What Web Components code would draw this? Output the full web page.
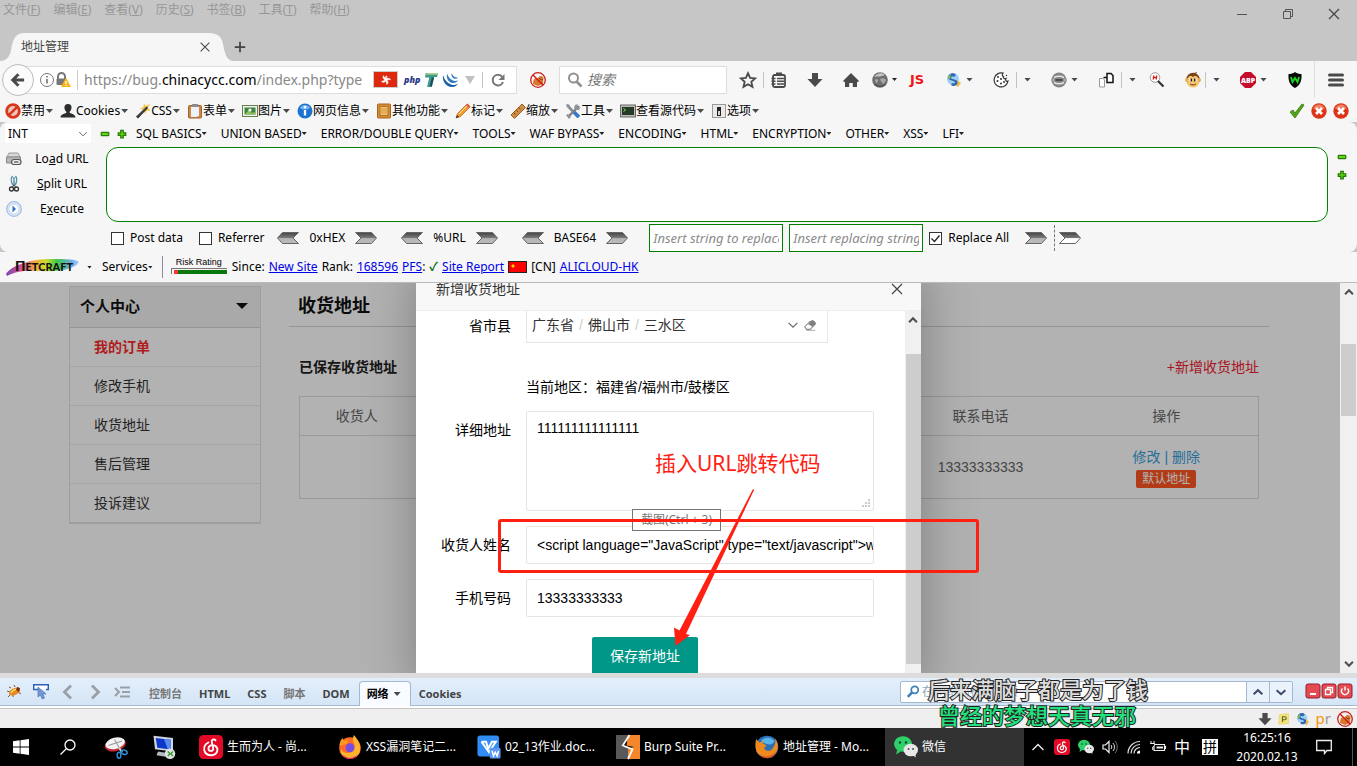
<!DOCTYPE html>
<html lang="zh-CN">
<head>
<meta charset="utf-8">
<title>地址管理</title>
<style>
html,body{margin:0;height:100%}
body{
  --ui:"Noto Sans","Noto Sans CJK SC",sans-serif;
  --web:"Liberation Sans","Noto Sans CJK SC",sans-serif;
  font:12px/16px var(--ui);color:#000;background:#f5f5f5;overflow:hidden}
</style>
</head>
<body>
<app-window></app-window>
<script>
const ICONS={
 min:'<path d="M3 8.500h10" stroke="#555" fill="none"/>',
 restore:'<path d="M3.500 5.500h7v7h-7zM5.500 5.500v-2h7v7h-2" stroke="#555" fill="none"/>',
 close:'<path d="M3 3l10 10M13 3L3 13" stroke="#444" stroke-width="1.200" fill="none"/>',
 plus:'<path d="M8 2v12M2 8h12" stroke="#444" stroke-width="2"/>',
 back:'<path d="M8.500 1.500L2 8l6.500 6.500M3 8h12" stroke="#4a4a4a" stroke-width="3.400" fill="none"/>',
 info:'<circle cx="8" cy="8" r="6.500" fill="none" stroke="#777"/><path d="M8 7v4.500M8 4v1.600" stroke="#666" stroke-width="1.500"/>',
 lock:'<path d="M3 7V4.500a3.500 3.500 0 017 0V7" fill="none" stroke="#777" stroke-width="2"/><rect x="1.500" y="6.500" width="9" height="6.500" rx="1" fill="#777"/><path d="M11 5.500l5 9.500H6z" fill="#fcb316"/><path d="M11 9v3M11 13v1" stroke="#fff" stroke-width="1.300"/>',
 php:'<text x="0" y="11" font-size="9" font-weight="800" font-style="italic" font-family="Open Sans,sans-serif" fill="#2c3a8c">php</text>',
 tt:'<path d="M2 0h14l-1 4.500h-3.500L9 16H3.500L6 5H1.200z" fill="#3c9a8c"/><path d="M3 0h13l-.5 2H2.500z" fill="#a8d08a"/><path d="M9 5L6.500 15H9L11.500 5z" fill="#1f4c5c"/>',
 swirl:'<path d="M1 3c-1 6 3 12 9 12 3 0 5-1.500 6-3.500-2 1.500-4.500 2-7 1C5 11 2.500 8 1 3z" fill="#1b5fa6"/><path d="M5 1.500c-1 5 1.500 9 5.500 9.500 2.500.3 4.500-.8 5.500-2.700-2 1-4 .8-6-.3C7.500 6.500 6 4.500 5 1.500z" fill="#2f7cc4"/><path d="M9.500 1c-.5 3 .8 5.300 3.200 5.700 1.300.2 2.600-.3 3.300-1.300-1.500.3-2.900 0-4-1C10.800 3.400 10 2.400 9.500 1z" fill="#2f7cc4"/>',
 hk:'<path d="M8 8C5 5 7 1 10 2 8 3 10 6 8 8zM8 8c2-4 7-3 7 0-2-2-4 1-7 0zM8 8c4 1 4 6 1 7 1-2-2-4-1-7zM8 8c-1 4-6 5-7 2 2 1 4-3 7-2zM8 8C4 8 2 3 4 1c0 3 4 3 4 7z" fill="#fff" stroke="#fff"/>',
 reload:'<path d="M13 10A5.300 5.300 0 118 2.800c2 0 3.500 1 4.600 2.600" fill="none" stroke="#777" stroke-width="2"/><path d="M14.500 2v6h-6z" fill="#777"/>',
 nofox:'<path d="M3 12c0-5 2-7 5-5.500 1-3 3.500-3 5.500-1L13 12l-5 2z" fill="#d9782c"/><path d="M9 6l2 2 2-1" stroke="#8a4210" fill="none"/><circle cx="8" cy="8" r="7.300" fill="none" stroke="#c82020" stroke-width="1.300"/><path d="M3 3l10 10" stroke="#d01818" stroke-width="1.400"/>',
 search:'<circle cx="6.500" cy="6" r="4.500" fill="none" stroke="#909090" stroke-width="2"/><path d="M9.500 9.500l5 5" stroke="#909090" stroke-width="2.600"/>',
 star:'<path d="M8 1.200l2.100 4.700 5 .5-3.800 3.400 1.200 5L8 12.200l-4.500 2.600 1.200-5L.9 6.400l5-.5z" fill="none" stroke="#4a4a4a" stroke-width="1.800"/>',
 clip:'<path d="M5 .5h6V3H5z" fill="#4a4a4a"/><rect x="2" y="3" width="12" height="12" rx="1.500" fill="none" stroke="#4a4a4a" stroke-width="1.800"/><path d="M.5 6.500h4M.5 9.300h4M.5 12h4M6 6.500h7M6 9.300h7M6 12h7" stroke="#4a4a4a" stroke-width="1.500"/>',
 down:'<path d="M5 1h6v6h4.500L8 15 .5 7H5z" fill="#4a4a4a"/>',
 home:'<path d="M8 1l8 8-1.300 1.200L14 9.500V15H9.800v-4H6.200v4H2V9.500l-.7.700L0 9z" fill="#4a4a4a"/>',
 globe:'<circle cx="8" cy="8" r="7.800" fill="#6f6f6f"/><path d="M2 5c3-4 8-5 11-2-4 2-7 1-11 2z" fill="#c4c4c4"/><path d="M3 8c1-1.500 3-1 3 .5S5 11 4.500 11 3 9 3 8zM8 7c2-1 5-1 6 1-1 3-2 3-3 4-1-2-3-3-3-5z" fill="#a6a6a6"/><path d="M2 12c4 3 8 3 12 0" stroke="#444" fill="none"/>',
 stylish:'<circle cx="7" cy="7" r="6" fill="#9cd0f5"/><path d="M2 5c1-4 6-5 8-2L8 5c-2-1-3 0-3 1 2 2 7 1 7 5-1 3-5 4-7 2l1-2c2 1 3 0 3-1C7 8 2 9 2 5z" fill="#3267b5"/><path d="M11 8l4 3-3 4-2-1c2-1 2-3 1-6z" fill="#f5b83c"/><path d="M1 6l4-4-1 5z" fill="#8cc63f"/>',
 cookie:'<path d="M10 1.200A7 7 0 1015 9c-2 1-3-1-2-2.500-2 .5-3-.5-2.500-2-1.500-.5-1.500-2-.5-3.300z" fill="#fff" stroke="#333" stroke-width="1.200"/><g fill="#333"><circle cx="5" cy="5" r="1"/><circle cx="8" cy="7" r="1"/><circle cx="4.500" cy="9" r="1"/><circle cx="8" cy="11.500" r="1"/><circle cx="11" cy="10" r="1"/><circle cx="13.500" cy="3.500" r=".7"/></g>',
 eye:'<circle cx="8" cy="8" r="7.500" fill="#858585"/><path d="M0 6.500h3.500v3H0zM12.500 6.500H16v3h-3.500z" fill="#a8a8a8"/><path d="M3 5.500c3-1.500 7-1.500 10 0M3 10.500c3 1.500 7 1.500 10 0" stroke="#e4e4e4" stroke-width="1.400" fill="none"/><path d="M4.500 7h7v2h-7z" fill="#4c4c4c"/>',
 proxy:'<path d="M1.500 6.500h3.500l1.500 1.500v7h-5z" fill="#fff" stroke="#999"/><path d="M9 1.500h4l2 2v7H9zM5.500 5.500H9" fill="#fff" stroke="#111" stroke-width="1.500"/>',
 hmag:'<circle cx="6" cy="5.500" r="4.800" fill="#fff" stroke="#999"/><path d="M9 9l5.500 5.500" stroke="#333" stroke-width="2.200"/><path d="M4.800 3.500l-.6 4M7.800 3.500l-.6 4M4.500 5.500h3" stroke="#e01818" stroke-width="1.300"/>',
 monkey:'<circle cx="8" cy="7.500" r="6.800" fill="#7a431d"/><path d="M9 1l3-1-1 2z" fill="#7a431d"/><circle cx="2" cy="8" r="2" fill="#e7a850"/><circle cx="14" cy="8" r="2" fill="#e7a850"/><path d="M3 6c1-3 4-2 5-1 1-1 4-2 5 1l1 5c-1 6-11 6-12 0z" fill="#f7c66a"/><path d="M4.500 6.500h2.500v3H4.500zM9 6.500h2.500v3H9z" fill="#fff"/><path d="M6.300 6.500v3M9.700 6.500v3" stroke="#1d1d1d" stroke-width="1.500"/><path d="M5 12c2 1.300 4 1.300 6 0" stroke="#6a3512" fill="none"/>',
 abp:'<path d="M5 0h6l5 5v6l-5 5H5l-5-5V5z" fill="#c70d2c"/><text x="8" y="10.800" text-anchor="middle" font-size="7" font-weight="800" font-family="Open Sans,sans-serif" fill="#fff">ABP</text>',
 wshield:'<path d="M8 0c2 1.500 4 2 6.500 2C15 9 13 13.500 8 16 3 13.500 1 9 1.500 2 4 2 6 1.500 8 0z" fill="#0a0a0a"/><path d="M4 5l1.500 5L8 6l2.500 4L12 5" fill="none" stroke="#17d81b" stroke-width="1.800"/>',
 burger:'<path d="M1.500 3h13M1.500 8h13M1.500 13h13" stroke="#4a4a4a" stroke-width="3" stroke-linecap="round"/>',
 ban:'<circle cx="8" cy="8" r="6.300" fill="#e9c7bd" stroke="#d8371c" stroke-width="2.800"/><path d="M3.800 12.200l8.400-8.400" stroke="#d8371c" stroke-width="2.600"/>',
 user:'<path d="M8 1c5 0 4 6 1.500 8 0 2 6 1.500 6 5.500h-15C.5 10.500 6.500 11 6.500 9 4 7 3 1 8 1z" fill="#2c2c2c"/>',
 wand:'<path d="M9 0l1.500 3L15 1l-2 4 2.500 3-4-.5L10 11 9 7 5 6l3.500-2z" fill="#f6c33c"/><path d="M1 13.500L11.500 3.500l1.500 1.500L3 15.500z" fill="#333"/><path d="M2 13l9-8.500" stroke="#888" stroke-width=".7"/>',
 form:'<rect x="1.500" y="2.500" width="13" height="12.500" rx="1" fill="#c98948" stroke="#a2602a"/><path d="M4 4h8v9l-3 1H4z" fill="#eef3fa"/><path d="M5 1h6v3H5z" fill="#8c8c8c"/>',
 image:'<rect x=".5" y="2.500" width="15" height="11" fill="#f1f3ea" stroke="#687d52"/><rect x="2.500" y="4.500" width="11" height="7" fill="#3d8540"/><path d="M3 11l4-4 3 3 2-1 2 2z" fill="#8fbf59"/><circle cx="8" cy="7" r="1.600" fill="#fff"/>',
 bluei:'<circle cx="8" cy="8" r="7.500" fill="#1c74d0"/><path d="M3 5c2-4 8-4 10 0-3 2-7 2-10 0z" fill="#76b7f0"/><path d="M8 7v5.500M8 3v2.200" stroke="#fff" stroke-width="2.300"/>',
 book:'<rect x="1.500" y="1" width="13" height="14" rx="1" fill="#d68e35" stroke="#a5621d"/><rect x="4" y="3.500" width="8" height="9" fill="#f5c878" stroke="#b06f25"/><path d="M5 6h6M5 8h6M5 10h6" stroke="#d1913f"/>',
 pencil:'<path d="M1 15l1.500-4.500L11.500 1.500l3 3L5.500 13.500z" fill="#f29b30" stroke="#b5641b" stroke-width=".7"/><path d="M11 2l1.500-1.500 3 3L14 5z" fill="#d8574a"/><path d="M1 15l1-3 2 2z" fill="#333"/><path d="M4 11l8-8" stroke="#ffe0a0"/>',
 ruler:'<path d="M1 12L12 1l3.500 3.500-11 11z" fill="#cf8d42" stroke="#9c5d20"/><path d="M4 10l1.500 1.500M6.500 7.500L8 9M9 5l1.500 1.500" stroke="#7c4413"/>',
 tools:'<path d="M2 2l11 12" stroke="#8b8f94" stroke-width="2.600"/><path d="M9 9l5 5" stroke="#3278cc" stroke-width="3.500"/><path d="M14 3L3 14" stroke="#7c8086" stroke-width="2.400"/><path d="M10 2l3-1-1 3 2 1 2-1-2 3-3 0-2-2zM1 12l2-1 3 3-2 2z" fill="#8f949a"/><path d="M1 1l4 1-2 3z" fill="#8f949a"/>',
 term:'<rect x=".5" y="2" width="15" height="12" fill="#b8bbb8" stroke="#6a6a6a"/><rect x="2" y="4" width="12" height="8" fill="#263b26"/><path d="M3.500 5.500l2 1.500-2 1.500" stroke="#7ed957" fill="none"/>',
 opts:'<rect x="1.500" y="1.500" width="13" height="13" fill="#e9e9e9" stroke="#9a9a9a"/><path d="M6 4h4v9H6z" fill="#222"/><path d="M7.200 8h1.600v4H7.200z" fill="#fff"/>',
 check:'<path d="M1 9l3-2 2 3 7-9 2 1L6 15z" fill="#52a318" stroke="#36780c" stroke-width=".8"/>',
 redx:'<circle cx="8" cy="8" r="7.700" fill="#dc3417"/><path d="M2 6c2-6 10-6 12 0-4-1-8-1-12 0z" fill="#f08262"/><path d="M5 5l6 6M11 5l-6 6" stroke="#fff" stroke-width="2.800"/>',
 minusg:'<rect x="2" y="5.500" width="12" height="5" rx="1" fill="#5fdc10" stroke="#2a7a0a" stroke-width="2"/>',
 plusg:'<path d="M6 2h4v4h4v4h-4v4H6v-4H2V6h4z" fill="#5fdc10" stroke="#2a7a0a" stroke-width="2"/>',
 printer:'<path d="M3 2h9l2 4H1z" fill="#d9d9d9" stroke="#9a9a9a"/><path d="M.5 6h14v6H.5z" fill="#b7b7b7" stroke="#8a8a8a"/><rect x="5.500" y="8.500" width="9.500" height="5" rx="2.500" fill="#eee" stroke="#555" stroke-width="1.200"/><path d="M8 11h4.500" stroke="#555" stroke-width="1.300"/>',
 scissors:'<path d="M6.800 9C5 6 5 2 6.500 0M9.200 9C11 6 11 2 9.500 0M8 1v8" stroke="#5d93a8" stroke-width="1.500" fill="none"/><circle cx="5.500" cy="13" r="2" fill="none" stroke="#333" stroke-width="1.300"/><circle cx="10.500" cy="13" r="2" fill="none" stroke="#333" stroke-width="1.300"/><path d="M6.500 11L8 9l1.500 2" stroke="#333" fill="none"/>',
 play:'<circle cx="8" cy="8" r="7.300" fill="#dfeaf8" stroke="#a4bfe2" stroke-width="1.300"/><circle cx="8" cy="8" r="5" fill="#fff" stroke="#c3d5ee"/><path d="M6.500 4.500L10 8l-3.500 3.500z" fill="#2f6fc0"/>',
 bug:'<path d="M1 7l3 1M2 13l3-3M7 13v-2M15 10l-3-2M5 4L3 3M9 3L8 1" stroke="#87592b"/><path d="M3 10c0-4 5-7 10-6 2 2 1 5-2 6-3 2-6 2-8 0z" fill="#e58a1f"/><path d="M5 9c1-2 4-4 8-4" stroke="#ffd66a" stroke-width="1.500" fill="none"/><path d="M11 3l3 1-1 4-3-2z" fill="#7b2d12"/>',
 inspect:'<path d="M5 5.500H.700V.700h14.600v4.800H13" fill="#fff" stroke="#2a5dbd" stroke-width="1.400"/><path d="M5 3v10l2.500-2 1.700 4 2.300-1-1.700-4H13z" fill="#7397d2" stroke="#4e74b8" stroke-width=".7"/>',
 prev:'<path d="M11 1.500L4.500 8l6.500 6.500" fill="none" stroke="#9a9fa5" stroke-width="2.800"/>',
 next:'<path d="M5 1.500L11.500 8 5 14.500" fill="none" stroke="#9a9fa5" stroke-width="2.800"/>',
 cmd:'<path d="M1 4l4 4-4 4M6 3.500h10M8 8h8M6 12.500h10" fill="none" stroke="#9a9fa5" stroke-width="2"/>',
 lens:'<circle cx="10" cy="5.500" r="4" fill="none" stroke="#3f80bd" stroke-width="2"/><path d="M7 8.500l-5 5" stroke="#3f80bd" stroke-width="3"/>',
 up2:'<path d="M3 10.500L8 6l5 4.500" fill="none" stroke="#3c4b68" stroke-width="2.400"/>',
 dn2:'<path d="M3 6l5 4.500L13 6" fill="none" stroke="#3c4b68" stroke-width="2.400"/>',
 rmin:'<rect x="1" y="1" width="14" height="14" rx="2" fill="#e24b52" stroke="#9d1a26"/><path d="M5 11h6" stroke="#fff" stroke-width="2"/>',
 rres:'<rect x="1" y="1" width="14" height="14" rx="2" fill="#e24b52" stroke="#9d1a26"/><path d="M4.500 6.500h5v5h-5zM6.500 6V4.500h5v5H10" fill="none" stroke="#fff" stroke-width="1.300"/>',
 rpow:'<rect x="1" y="1" width="14" height="14" rx="2" fill="#e24b52" stroke="#9d1a26"/><path d="M5.500 5.500a3.500 3.500 0 105 0M8 3.500v4" fill="none" stroke="#fff" stroke-width="1.400"/>',
 pnote:'<path d="M2 2l12-1v13l-13 1z" fill="#f5e27a" stroke="#e8d468"/><path d="M6 12V5h3a2 2 0 010 4H6" stroke="#5a6b2a" fill="none" stroke-width="1.500"/>',
 win:'<path d="M0 2.300L6.700 1.300v6.300H0zM7.500 1.200L16 0v7.600H7.500zM0 8.400h6.700v6.300L0 13.700zM7.500 8.400H16V16l-8.500-1.200z" fill="#fff"/>',
 tsearch:'<circle cx="10" cy="6" r="5" fill="none" stroke="#fff" stroke-width="1.300"/><path d="M6.500 9.500L.5 15.500" stroke="#fff" stroke-width="1.300"/>',
 snip:'<ellipse cx="7.500" cy="6.500" rx="7.200" ry="4.300" fill="#c92a35" transform="rotate(-14 7.500 6.500)"/><ellipse cx="7.500" cy="5.500" rx="6.600" ry="3.700" fill="#f2f2f2" transform="rotate(-14 7.500 5.500)"/><path d="M3 7l9-3M7 3l4 7" stroke="#999" stroke-width=".7"/><path d="M10 8.500l2 3" stroke="#ccc" stroke-width="1.300"/><ellipse cx="10" cy="13.500" rx="1.200" ry="2" fill="none" stroke="#2b8ed6"/><ellipse cx="13.500" cy="11.500" rx="2" ry="1.400" fill="none" stroke="#2b8ed6" transform="rotate(20 13.500 11.500)"/>',
 rdp:'<path d="M1 .5L14 2v9L2 9.500z" fill="#cfd6df"/><path d="M2.500 2l10 1.200v6.500L3.500 8.500z" fill="#0e37c9"/><path d="M8 2.700l4.500.5v6.500l-2-.2z" fill="#5b8cf0"/><path d="M4 11l6 1-1 2.500-6-1z" fill="#b5bac0"/><circle cx="12" cy="12.500" r="3.500" fill="#dfe4e0"/><path d="M10.500 11l1.500 1.500-1.500 1.500M14 11l-1.500 1.500L14 14" stroke="#3f9a3a" fill="none"/>',
 netease:'<rect width="16" height="16" rx="3" fill="#e20a26"/><path d="M11 3.500C10 2.500 8.200 3 8.500 4.500l1 4.500c.2 2-3 2.300-3.200.2C6.200 7 9 6 11 7.300c2.400 2 1.300 6-2.700 6.200C2.500 13.500 2 7 6.300 5" fill="none" stroke="#fff" stroke-width="1.200" stroke-linecap="round"/>',
 ffnew:'<circle cx="8" cy="8.700" r="7.200" fill="#ff6a2b"/><path d="M2 12c3 5 11 4 12.500-1 1-4-1-8-4-11-.500 2-1 3 0 5 2 4-1 7-4 7-2 0-4-1-4.500-3z" fill="#ffb52b"/><path d="M1 7c0-2 1-4 2-5l1 2 3-1-1 3z" fill="#ff9a1f"/><circle cx="8" cy="8.500" r="3" fill="#7a4be0"/><path d="M3 13c3 3 7 3 10 0-2 4-8 4-10 0z" fill="#e8257a"/>',
 ffold:'<circle cx="8" cy="8" r="7.500" fill="#2d6fb5"/><path d="M4 4c2-3 7-3 9 0-1 3-5 3-9 0z" fill="#56b4e8"/><path d="M1 3l2 2 3-1-1 2c3 0 3 2 1 2.500 1 3 5 2.500 6 0 2-3 2-5 1-6.500 3 3 3 8 0 11-4 3-10 2-12-2-1-3-1-6 0-9z" fill="#f08a1d"/><path d="M3 13c3 2 8 2 11-2-1 5-8 6-11 2z" fill="#e2521a"/>',
 wps:'<rect x=".3" y=".3" width="14.400" height="14" rx="1.800" fill="#2f8df5"/><path d="M3 4.500h3l1.500 4.500L10 4.500h2.500L8 11.500 3 4.500" fill="none" stroke="#fff" stroke-width="1.400"/><rect x="8.500" y="8.500" width="7.200" height="7.200" rx="1" fill="#5a96f5"/><path d="M10 10.500l1 3.500 1.200-2.500 1.200 2.500 1-3.500" fill="none" stroke="#fff"/>',
 burp:'<path d="M0 0h9L4 8h4v8H0z" fill="#57585a"/><path d="M8 0h8v16H8V9l4-1-5-1z" fill="#f5862b"/><path d="M9 0L4.500 7l6.500 2.500-3 6.500" fill="none" stroke="#fff" stroke-width="1.200"/>',
 wechat:'<ellipse cx="6" cy="6" rx="6" ry="5.200" fill="#2fd06a"/><path d="M2 10l-.5 3 3-2z" fill="#2fd06a"/><ellipse cx="11.200" cy="10" rx="4.800" ry="4.200" fill="#e8e8e8"/><path d="M12 13l2.500 2-.3-3z" fill="#e8e8e8"/><circle cx="4" cy="5" r=".8" fill="#143"/><circle cx="8" cy="5" r=".8" fill="#143"/><circle cx="9.700" cy="9.300" r=".7" fill="#555"/><circle cx="12.700" cy="9.300" r=".7" fill="#555"/>',
 tup:'<path d="M2.500 11L8 5.500 13.500 11" fill="none" stroke="#eee" stroke-width="1.400"/>',
 vol:'<path d="M1 6h2.500L7 2.500v11L3.500 10H1z" fill="none" stroke="#eee" stroke-width="1.200"/><path d="M9 6c1 1 1 3 0 4M11 4c2 2 2 6 0 8" fill="none" stroke="#ddd"/><path d="M13 2c3 3 3 9 0 12" fill="none" stroke="#777"/>',
 wifi:'<path d="M2 14.500A12 12 0 0114 2.500M5 14.500a9 9 0 019-9M8 14.500a6 6 0 016-6" fill="none" stroke="#ddd" stroke-width="1.200"/><path d="M11 14.500a3 3 0 013-3v3z" fill="#fff"/>',
 batt:'<path d="M4 5.500h10.500v6H4zM15.500 7v3" fill="none" stroke="#eee" stroke-width="1.200"/><path d="M6.500 7.500H13v2H6.500z" fill="#eee"/><path d="M1 2v3M4 2v3M.3 4.500h4.400v2l-2 1.500v3" fill="#000" stroke="#eee"/>',
 note:'<path d="M.700 1.500h14.600v10H11L8.500 14.500v-3H.700z" fill="none" stroke="#eee" stroke-width="1.300"/>',
 chev:'<path d="M3 5.500l5 5 5-5" fill="none" stroke="#666" stroke-width="1.300"/>',
 eraser:'<path d="M2 10l6-6h5l1 3-6 6H4z" fill="#fff" stroke="#888" stroke-width="1.200"/><path d="M8 4l3-2 4 4-4 4-5-3z" fill="#808080"/><path d="M4 14h10" stroke="#999"/>',
 sup:'<path d="M3.500 10.500L8 6l4.500 4.500" fill="none" stroke="#505050" stroke-width="2.400"/>',
 sdn:'<path d="M3.500 5.500L8 10l4.500-4.500" fill="none" stroke="#505050" stroke-width="2.400"/>',
 dotg:'<path d="M11 3h2v2h-2zM11 7h2v2h-2zM7 7h2v2H7zM11 11h2v2h-2zM7 11h2v2H7zM3 11h2v2H3z" fill="#a5a5a5"/>'
};
const define=(name,html,setup)=>{
  const t=document.createElement('template');t.innerHTML=html;
  customElements.define(name,class extends HTMLElement{
    constructor(){super();this.attachShadow({mode:'open'}).append(t.content.cloneNode(true));}
    connectedCallback(){setup&&setup(this,this.shadowRoot);}
  });
};
const reset='*{box-sizing:border-box}button,input,select,textarea{font:inherit;color:inherit;margin:0;border:0;padding:0;background:none;outline:0}button{display:flex;align-items:center;white-space:nowrap}';

/* ---- small shared parts ---- */
define('ui-icon','<style>:host{display:inline-flex;flex:none;width:var(--size,16px);height:var(--size,16px)}svg{width:100%;height:100%;display:block;overflow:visible}</style><svg viewBox="0 0 16 16" aria-hidden="true"></svg>',
 (el,r)=>{r.querySelector('svg').innerHTML=ICONS[el.getAttribute('name')]||'';const s=el.getAttribute('size');if(s)el.style.setProperty('--size',s+'px');});
define('drop-mark','<style>:host{display:inline-block;flex:none;width:7px;height:4px;background:#4a4a4a;clip-path:polygon(0 0,100% 0,50% 100%)}:host([small]){width:5px;height:3px;background:#222}</style>');
define('menu-item',`<style>${reset}:host{display:block;flex:none}drop-mark{margin-left:1px}</style><button><slot></slot><drop-mark></drop-mark></button>`);
define('text-menu',`<style>${reset}:host{display:block;flex:none}</style><button><slot></slot><drop-mark small></drop-mark></button>`);
define('arrow-tag',`<style>${reset}:host{display:block;flex:none}svg{display:block}</style><button aria-label="convert"><svg width="22" height="12" viewBox="0 0 22 12"><defs><linearGradient id="g" x2="0" y2="1"><stop offset="0" stop-color="#444"/><stop offset=".5" stop-color="#7c7c7c"/><stop offset=".55" stop-color="#b5b5b5"/><stop offset="1" stop-color="#bbb"/></linearGradient></defs><path d="M.5.5h16l5 5.500-5 5.500H.5L6 6z" fill="url(#g)" stroke="#666"/></svg></button>`,
 (el,r)=>{if(el.hasAttribute('left'))r.querySelector('svg').style.transform='scaleX(-1)';if(el.hasAttribute('open'))r.querySelectorAll('stop').forEach((s,i)=>{if(i>1)s.setAttribute('stop-color','#fff')});});

/* ---- browser chrome ---- */
define('title-bar',`<style>${reset}
:host{display:block;background:#c6c6c6}
.top{display:flex;justify-content:space-between;height:33px}
nav{display:flex;gap:13px;padding:0 3px;height:20px;color:#979797}
.win{display:flex;padding-top:6px}.win button{width:46px;height:16px;justify-content:center}
.tabs{display:flex;align-items:flex-end;height:28px;gap:3px}
.tab{position:relative;width:230px;height:28px;display:flex;align-items:center;justify-content:space-between;padding:0 18px 0 21px;color:#444}
.tab svg{position:absolute;inset:0;z-index:0}.tab>span,.tab>button{position:relative}
.add{height:28px}
</style>
<div class="top"><nav><button>文件(<u>F</u>)</button><button>编辑(<u>E</u>)</button><button>查看(<u>V</u>)</button><button>历史(<u>S</u>)</button><button>书签(<u>B</u>)</button><button>工具(<u>T</u>)</button><button>帮助(<u>H</u>)</button></nav>
<div class="win"><button aria-label="min"><ui-icon name="min"></ui-icon></button><button aria-label="restore"><ui-icon name="restore"></ui-icon></button><button aria-label="close"><ui-icon name="close"></ui-icon></button></div></div>
<div class="tabs"><div class="tab"><svg width="234" height="28" viewBox="0 0 234 28"><path d="M0 28c7 0 10-5 11-11C13 6 15 0 25 0H209c10 0 13 5 14 11 2 11 4 17 11 17z" fill="#f6f6f6"/></svg><span>地址管理</span><button aria-label="close tab"><ui-icon name="close" size="14"></ui-icon></button></div><button class="add" aria-label="new tab"><ui-icon name="plus" size="14"></ui-icon></button></div>`);

define('nav-bar',`<style>${reset}
:host{display:flex;box-sizing:border-box;align-items:center;height:39px;background:#f6f6f6;padding:0 13px 2px 2px}
.back{width:32px;height:32px;border:1px solid #bbb;border-radius:50%;justify-content:center;background:#fbfbfb;position:relative;flex:none}
.url{width:491px;height:28px;margin-left:-8px;border:1px solid #ddd;background:#fff;display:flex;align-items:center;padding-left:12px;flex:none}
.addr{width:292px;height:20px;border-left:1px solid #ccc;padding-left:6px;margin:0 4px 0 6px;font-size:14px;line-height:20px;color:#888;white-space:nowrap}
.addr b{font-weight:400;color:#000}
.flag{width:25px;height:17px;background:#de2910;border:1px solid #ccc;display:flex;align-items:center;justify-content:center;margin-right:6px}
.tri{border:5px solid transparent;border-top:8px solid #c0c0c0;border-bottom:0}
.s{width:1px;height:16px;background:#c4c4c4;flex:none}
.find{width:168px;height:28px;border:1px solid #ddd;background:#fff;display:flex;align-items:center;padding-left:7px;gap:4px;flex:none}
.find input{width:120px;font-size:14px;font-style:italic}.find input::placeholder{color:#777}
.n4{margin-left:4px}.n8{margin-left:7px}.n12{margin-left:13px}.n20{margin-left:20px}
.js{font:bold 13px/16px "DejaVu Sans",sans-serif;color:#f01414;width:16px}
.grow{flex:1}.full{height:37px;background:#ddd}
</style>
<button class="back" aria-label="back"><ui-icon name="back" size="14"></ui-icon></button>
<div class="url"><ui-icon name="info"></ui-icon><ui-icon name="lock"></ui-icon><div class="addr">https://bug.<b>chinacycc.com</b>/index.php?type</div><span class="flag"><ui-icon name="hk" size="10"></ui-icon></span><ui-icon name="php"></ui-icon><ui-icon name="tt" class="n4" size="14"></ui-icon><ui-icon name="swirl" class="n4"></ui-icon><i class="tri n8"></i><i class="s n8"></i><button class="n8" aria-label="reload"><ui-icon name="reload"></ui-icon></button></div>
<button class="n12" aria-label="noscript"><ui-icon name="nofox"></ui-icon></button>
<div class="find n12"><ui-icon name="search"></ui-icon><input aria-label="搜索" placeholder="搜索"></div>
<button class="n12" aria-label="star"><ui-icon name="star"></ui-icon></button><i class="s n8"></i>
<button class="n8" aria-label="library"><ui-icon name="clip"></ui-icon></button>
<button class="n20" aria-label="downloads"><ui-icon name="down"></ui-icon></button>
<button class="n20" aria-label="home"><ui-icon name="home"></ui-icon></button>
<button class="n12" aria-label="proxy"><ui-icon name="globe"></ui-icon><drop-mark small class="n4"></drop-mark></button>
<button class="n12 js">JS</button>
<button class="n20" aria-label="stylish"><ui-icon name="stylish"></ui-icon><drop-mark class="n4"></drop-mark></button>
<button class="n20" aria-label="cookies"><ui-icon name="cookie"></ui-icon></button><i class="s n8"></i><drop-mark class="n8"></drop-mark>
<button class="n20" aria-label="view"><ui-icon name="eye"></ui-icon><drop-mark class="n4"></drop-mark></button>
<button class="n20" aria-label="switch"><ui-icon name="proxy"></ui-icon></button><i class="s n8"></i><drop-mark class="n8"></drop-mark>
<button class="n12" aria-label="hunt"><ui-icon name="hmag"></ui-icon></button>
<button class="n20" aria-label="monkey"><ui-icon name="monkey"></ui-icon></button><i class="s n4"></i><drop-mark class="n8"></drop-mark>
<button class="n20" aria-label="abp"><ui-icon name="abp"></ui-icon><drop-mark class="n4"></drop-mark></button>
<button class="n20" aria-label="wot"><ui-icon name="wshield"></ui-icon></button><span class="grow"></span><i class="s full"></i>
<button class="n12" aria-label="menu"><ui-icon name="burger"></ui-icon></button>`);

define('dev-bar',`<style>${reset}
:host{display:flex;align-items:center;height:22px;padding:0 8px 0 5px;gap:7px;background:#f6f6f6}
.end{margin-left:auto;display:flex;gap:6px}
</style>
<menu-item><ui-icon name="ban"></ui-icon>禁用</menu-item><menu-item><ui-icon name="user"></ui-icon>Cookies</menu-item><menu-item><ui-icon name="wand"></ui-icon>CSS</menu-item><menu-item><ui-icon name="form"></ui-icon>表单</menu-item><menu-item><ui-icon name="image"></ui-icon>图片</menu-item><menu-item><ui-icon name="bluei"></ui-icon>网页信息</menu-item><menu-item><ui-icon name="book"></ui-icon>其他功能</menu-item><menu-item><ui-icon name="pencil"></ui-icon>标记</menu-item><menu-item><ui-icon name="ruler"></ui-icon>缩放</menu-item><menu-item><ui-icon name="tools"></ui-icon>工具</menu-item><menu-item><ui-icon name="term"></ui-icon>查看源代码</menu-item><menu-item><ui-icon name="opts"></ui-icon>选项</menu-item>
<div class="end"><ui-icon name="check"></ui-icon><ui-icon name="redx"></ui-icon><ui-icon name="redx"></ui-icon></div>`);

define('hack-bar',`<style>${reset}
:host{display:block;background:#c6c6c6}
.card{background:#f6f6f6;border-radius:8px;height:130px}
.menu{display:flex;align-items:center;height:25px;padding:0 0 2px 5px;gap:9px}
.menu nav{display:flex;gap:14px}
.pick{width:86px;height:19px;background:#fff;display:flex;align-items:center;padding-right:2px}
.pick select{appearance:none;flex:1;padding-left:3px}.pick ui-icon{margin-left:-12px;pointer-events:none}
.pm{display:flex;gap:7px}
.main{display:flex;height:76px;padding-right:3px}
.acts{width:106px;display:grid;grid-auto-rows:25px;margin-top:-1px}
.acts button{padding-left:6px}.acts span{flex:1;text-align:center;padding-right:4px}
textarea{flex:1;height:75px;border:1px solid #008000;border-radius:12px;background:#fff;resize:none}
.side{width:17px;margin:5px 0 0 9px;display:grid;grid-auto-rows:18px}
.opts{display:flex;align-items:center;height:29px;padding:1px 0 0 111px}
label{display:flex;align-items:center;gap:6px;margin-right:16px;white-space:nowrap}
input[type=checkbox]{appearance:none;width:13px;height:13px;border:1px solid #333;background:#fff}
.ck{position:relative;display:flex}.ck svg{position:absolute;inset:0;pointer-events:none}
.conv{display:flex;align-items:center;gap:10px;margin-right:24px}.opts label+.conv{margin-left:-3px}
.rep{width:134px;height:28px;border:1px solid #008000;background:#fff;font-size:13px;font-style:italic;padding:0 3px;margin-right:6px}
.conv+.rep{margin-left:-3px}
.rep::placeholder{color:#8a8a8a;opacity:1}
.dash{height:26px;border-left:1px dashed #777;margin:0 4px 0 7px}
</style>
<div class="card">
<div class="menu"><div class="pick"><select aria-label="type"><option>INT</option></select><ui-icon name="chev" size="12"></ui-icon></div>
<div class="pm"><ui-icon name="minusg" size="10"></ui-icon><ui-icon name="plusg" size="10"></ui-icon></div>
<nav><text-menu>SQL BASICS</text-menu><text-menu>UNION BASED</text-menu><text-menu>ERROR/DOUBLE QUERY</text-menu><text-menu>TOOLS</text-menu><text-menu>WAF BYPASS</text-menu><text-menu>ENCODING</text-menu><text-menu>HTML</text-menu><text-menu>ENCRYPTION</text-menu><text-menu>OTHER</text-menu><text-menu>XSS</text-menu><text-menu>LFI</text-menu></nav></div>
<div class="main"><div class="acts"><button><ui-icon name="printer"></ui-icon><span>Lo<u>a</u>d URL</span></button><button><ui-icon name="scissors"></ui-icon><span><u>S</u>plit URL</span></button><button><ui-icon name="play"></ui-icon><span>E<u>x</u>ecute</span></button></div>
<textarea aria-label="URL"></textarea><div class="side"><ui-icon name="minusg" size="10"></ui-icon><ui-icon name="plusg" size="10"></ui-icon></div></div>
<div class="opts"><label><input type="checkbox">Post data</label><label><input type="checkbox">Referrer</label>
<div class="conv"><arrow-tag left></arrow-tag>0xHEX<arrow-tag></arrow-tag></div><div class="conv"><arrow-tag left></arrow-tag>%URL<arrow-tag></arrow-tag></div><div class="conv"><arrow-tag left></arrow-tag>BASE64<arrow-tag></arrow-tag></div>
<input class="rep" aria-label="search string" placeholder="Insert string to replace"><input class="rep" aria-label="replacement" placeholder="Insert replacing string">
<label><span class="ck"><input type="checkbox" checked><svg width="13" height="13"><path d="M2.500 6.500l3 3 5-6" fill="none" stroke="#222" stroke-width="1.300"/></svg></span>Replace All</label><arrow-tag></arrow-tag><i class="dash"></i><arrow-tag open></arrow-tag></div>
</div>`);

define('netcraft-bar',`<style>${reset}
:host{display:flex;box-sizing:border-box;align-items:center;height:31px;padding-left:6px;gap:4px;background:#f6f6f6;border-bottom:1px solid #b9b9b9;white-space:nowrap}
a{color:#0000e6}
.logo{margin-right:3px}
.svc{margin:0 5px 0 6px}
.sep{width:1px;height:22px;background:#8d8d9b;margin-right:4px}
.risk{width:56px;font:9px/11px "Liberation Sans",sans-serif;text-align:center;align-self:flex-start;padding-top:5px;margin-right:1px}
.bar{height:6px;border:1px solid #777;border-width:1px 0 0 1px;background:linear-gradient(90deg,#fff 2px,#f33 2px 6px,#087808 6px) 0 1px no-repeat}
.flag{width:19px;height:12px;border:1px solid #222;background:radial-gradient(circle at 4px 4px,#ffde00 1px,#f00 2px)}
.ok{color:#096b12;font-weight:bold}
</style>
<svg class="logo" width="74" height="20" viewBox="0 0 74 20"><defs><linearGradient id="r"><stop offset="0" stop-color="#7a45b5"/><stop offset=".2" stop-color="#d5508c"/><stop offset=".4" stop-color="#f5a83c"/><stop offset=".55" stop-color="#c8e030"/><stop offset=".7" stop-color="#3ec84a"/><stop offset=".9" stop-color="#6fa9ec"/><stop offset="1" stop-color="#a8cef8"/></linearGradient></defs><path d="M0 17C6 8 25 2 45 2c15 0 25 0 28 3-4 7-20 10-38 9C20 13 9 14 1 19z" fill="url(#r)"/><text x="9" y="14" font-family="Lato,sans-serif" font-weight="900" font-size="11" fill="#111"><tspan font-size="14">П</tspan>ETCRAFT</text></svg>
<drop-mark small></drop-mark><text-menu class="svc">Services</text-menu><i class="sep"></i>
<div class="risk">Risk Rating<div class="bar"></div></div>
<span>Since:</span><a href="#">New Site</a><span>Rank:</span><a href="#">168596</a><span><a href="#">PFS</a>:</span><span class="ok">✓</span><a href="#">Site Report</a><i class="flag"></i><span>[CN]</span><a href="#">ALICLOUD-HK</a>`);

/* ---- page ---- */
define('scroll-track',`<style>:host{display:flex;box-sizing:border-box;flex-direction:column;align-items:center;width:17px;flex:none;background:#f0f0f0;padding:2px 0}
i{width:15px;flex:none;height:var(--thumb);margin-top:var(--top);background:#cdcdcd}.e{flex:1}</style><ui-icon name="sup" size="14"></ui-icon><i></i><span class="e"></span><ui-icon name="sdn" size="14"></ui-icon>`);

define('side-menu',`<style>${reset}
:host{display:block;width:192px;flex:none;margin-top:3px;font-size:14px;color:#333}
section{border:1px solid #e3e3e3;border-bottom-width:2px}
h2{margin:0;height:41px;font-size:15px;display:flex;align-items:center;justify-content:space-between;padding:0 12px 2px 10px;background:#f3f3f3;border-bottom:1px solid #d6d6d6;color:#111}
h2 i{border:6px solid transparent;border-top-color:#111;border-bottom:0}
a{display:flex;align-items:center;height:39px;padding-left:24px;border-bottom:1px solid #ebebeb;color:inherit;text-decoration:none}
a:last-child{border:0;height:38px}a.on{color:#fb2c2c;font-weight:bold}
</style><section><h2>个人中心<i></i></h2><a class="on" href="#">我的订单</a><a href="#">修改手机</a><a href="#">收货地址</a><a href="#">售后管理</a><a href="#">投诉建议</a></section>`);

define('address-list',`<style>${reset}
:host{display:block;flex:1;font:14px/20px var(--web);color:#666}
h1{margin:0;height:44px;font-size:18px;line-height:46px;padding-left:9px;border-bottom:1px solid #d6d6d6;color:#111}
.in{padding:0 10px}
.hd{display:flex;justify-content:space-between;padding:30px 0 19px;color:#222}
.hd a{color:#f3222f;text-decoration:none}
table{width:100%;border-collapse:collapse;table-layout:fixed;text-align:center;border:1px solid #dcdcdc}
th{font-weight:400;height:39px;padding:0}td{height:63px;padding:0;border-top:1px solid #dcdcdc}
td a{color:#38a0dc;text-decoration:none}
.tag{display:block;width:60px;margin:3px auto 0;border-radius:2px;background:#ff5722;color:#fff;font-size:12px;line-height:18px}
</style><h1>收货地址</h1><div class="in"><div class="hd"><b>已保存收货地址</b><a href="#">+新增收货地址</a></div>
<table><colgroup><col style="width:114px"><col><col style="width:188px"><col style="width:184px"></colgroup><thead><tr><th>收货人</th><th></th><th>联系电话</th><th>操作</th></tr></thead><tbody><tr><td></td><td></td><td>13333333333</td><td><a href="#">修改</a> <a>|</a> <a href="#">删除</a><span class="tag">默认地址</span></td></tr></tbody></table></div>`);

define('address-dialog',`<style>${reset}
:host{display:flex;flex-direction:column;height:calc(100% + 36px);margin-top:-16px;background:#fff;box-shadow:1px 1px 50px rgba(0,0,0,.3);font:14px/20px var(--web)}
header{height:44px;display:flex;align-items:center;justify-content:space-between;padding:0 16px 0 20px;background:#f8f8f8;border-bottom:1px solid #eee;color:#333;flex:none}
.body{flex:1;display:flex;overflow:hidden}
form{flex:1;display:grid;grid-template-columns:95px 348px;column-gap:15px;align-content:start}
form>label{text-align:right;padding-top:9px}
.area{width:302px;height:32px;border:1px solid #e6e6e6;border-top:0;display:flex;align-items:center;padding:0 10px 4px 5px;color:#333}
.area span{flex:1;text-align:left}.area s{color:#ccc;text-decoration:none;margin:0 5px}.area ui-icon{margin-left:3px}
.top{line-height:12px}
p{grid-column:2;margin:34px 0 14px}
input,textarea{width:100%;border:1px solid #e6e6e6;border-radius:2px;padding:0 0 0 10px;height:38px;margin-bottom:15px;display:block}
textarea{height:100px;padding-top:6px;resize:none}
.ta{position:relative}.ta ui-icon{position:absolute;right:2px;bottom:17px}
.save{grid-column:1/-1;justify-self:start;margin:5px 0 0 176px;width:106px;height:38px;justify-content:center;background:#009688;color:#fff;border-radius:2px}
scroll-track{--thumb:310px;--top:27px;width:16px}
</style>
<header>新增收货地址<button aria-label="关闭"><ui-icon name="close"></ui-icon></button></header>
<div class="body"><form onsubmit="return false">
<label for="c" class="top">省市县</label><button type="button" class="area" id="c" aria-haspopup="listbox"><span>广东省<s>/</s>佛山市<s>/</s>三水区</span><ui-icon name="chev" size="14"></ui-icon><ui-icon name="eraser" size="14"></ui-icon></button>
<p>当前地区：福建省/福州市/鼓楼区</p>
<label for="d">详细地址</label><div class="ta"><textarea id="d">111111111111111</textarea><ui-icon name="dotg" size="12"></ui-icon></div>
<label for="n">收货人姓名</label><input id="n" value='&lt;script language="JavaScript" type="text/javascript"&gt;w'>
<label for="m">手机号码</label><input id="m" value="13333333333">
<button class="save">保存新地址</button></form><scroll-track></scroll-track></div>`);

define('note-layer',`<style>:host{position:absolute;inset:0;pointer-events:none;color:#ff2012}
.t{position:absolute;left:239px;top:166px;font-size:21px;line-height:28px;white-space:nowrap}
.tip{position:absolute;left:216px;top:226px;width:89px;height:22px;box-sizing:border-box;border:1px solid #767676;background:#fff;color:#777;line-height:20px;text-align:center;white-space:nowrap}
.box{position:absolute;left:82px;top:236px;width:481px;height:54px;box-sizing:border-box;border:3px solid #ff2012;border-radius:3px}
svg{position:absolute;left:0;top:0;overflow:visible}</style>
<span class="tip">截图(Ctrl + 3)</span><div class="box"></div><span class="t">插入URL跳转代码</span>
<svg width="505" height="390"><path d="M337 206l1 1L270 351l4 1-14.500 11L258 344.500l5.500 3z" fill="#ff2012"/></svg>`);

define('page-view',`<style>${reset}
:host{display:flex;flex:1;min-height:0;background:#fff;overflow:hidden}
.doc{position:relative;flex:1;overflow:hidden}
.wrap{max-width:1202px;margin:0 auto;padding-right:2px;display:flex;gap:28px}
.shade{position:absolute;inset:0;background:rgba(0,0,0,.3);display:flex;justify-content:center;padding-right:3px}
.frame{position:relative;width:505px}
.doc+scroll-track{--thumb:72px;--top:45px}
</style><div class="doc"><div class="wrap"><side-menu></side-menu><address-list></address-list></div>
<div class="shade"><div class="frame"><address-dialog></address-dialog><note-layer></note-layer></div></div></div><scroll-track></scroll-track>`);

/* ---- firebug, status, taskbar ---- */
define('firebug-panel',`<style>${reset}
:host{display:block;position:relative;border-top:5px solid #dcdcdc;background:#fff;border-bottom:1px solid #c4c4c4;font-size:11px}
.bar{display:flex;align-items:center;height:28px;background:linear-gradient(#e3effb,#d4e5f6);border-bottom:1px solid #a5b8cf;padding:0 4px 0 6px}
.ic{display:flex;gap:11px;width:143px}
.tabs{display:flex;gap:17px;font-weight:bold;color:#444;align-items:center;align-self:stretch;padding-top:4px}
.tabs .z{color:#777}
.on{align-self:stretch;margin:-1px -9px -1px -8px;padding:0 9px 0 7px;gap:5px;background:#f8fbff;border:1px solid #a5b8cf;border-bottom:0;border-radius:4px 4px 0 0;color:#000}
.find{margin-left:auto;width:393px;height:22px;border:1px solid #a5b8cf;border-radius:2px;background:#fff;display:flex;align-items:center;padding-left:5px;gap:2px}
.find input{flex:1;font-size:12px}.find input::placeholder{color:#8ca3bd}
.find button{height:20px;width:23px;justify-content:center;border-left:1px solid #a5b8cf;background:#eaf2fb;margin-left:-2px}
.red{display:flex;margin:0 0 2px 12px}
.gap{height:2px}
.lyric{position:absolute;right:0;top:-3px;width:429px;font:500 22px/26px "Noto Sans CJK SC",sans-serif;color:#ddd;-webkit-text-stroke:2px #222;paint-order:stroke fill;pointer-events:none}
.lyric div+div{color:#21e07e;padding-left:10px}
</style><div class="bar"><div class="ic"><ui-icon name="bug"></ui-icon><ui-icon name="inspect"></ui-icon><ui-icon name="prev"></ui-icon><ui-icon name="next"></ui-icon><ui-icon name="cmd"></ui-icon></div>
<div class="tabs"><button class="z">控制台</button><button>HTML</button><button>CSS</button><button class="z">脚本</button><button>DOM</button><button class="on">网络<drop-mark></drop-mark></button><button>Cookies</button></div>
<div class="find"><ui-icon name="lens" size="14"></ui-icon><input aria-label="search" placeholder="在网络面板中搜索"><button aria-label="up"><ui-icon name="up2" size="14"></ui-icon></button><button aria-label="down"><ui-icon name="dn2" size="14"></ui-icon></button></div>
<div class="red"><ui-icon name="rmin"></ui-icon><ui-icon name="rres"></ui-icon><ui-icon name="rpow"></ui-icon></div></div><div class="gap"></div>
<div class="lyric"><div>后来满脑子都是为了钱</div><div>曾经的梦想天真无邪</div></div>`);

define('status-bar',`<style>:host{display:flex;justify-content:flex-end;align-items:center;gap:6px;height:19px;background:#efefef;padding-right:4px}
b{font:15px/18px "Noto Sans",sans-serif;color:#f5960c;padding-bottom:1px}b span{color:#999}</style>
<ui-icon name="down" size="14"></ui-icon><ui-icon name="pnote" size="12"></ui-icon><ui-icon name="stylish" size="14"></ui-icon><b>p<span>r</span></b><ui-icon name="nofox"></ui-icon>`);

define('task-item',`<style>${reset}:host{display:block;width:139px;flex:none}:host([active]){background:#323232}
button{width:100%;height:100%;padding-left:9px;gap:4px}</style><button><slot></slot></button>`);
define('task-bar',`<style>${reset}
:host{display:flex;height:38px;background:#000;color:#fff;flex:none}
.l{display:grid;grid-template-columns:42px repeat(3,48px);align-items:center;justify-items:center;width:190px;padding-left:2px}
.l ui-icon:first-child{justify-self:center;margin-right:4px}
task-item ui-icon{--size:24px}
.tray{margin-left:auto;display:flex;align-items:center;gap:8px}
.zh{font-size:16px;line-height:24px;margin-right:4px}.py{color:#000;font-size:14px;line-height:22px;background:linear-gradient(#fff,#fff) center/100% 16px no-repeat;padding:0 1px}
.clk{width:82px;text-align:center;line-height:19px}
.edge{width:1px;height:38px;background:#555;margin:0 4px 0 12px}
</style><div class="l"><ui-icon name="win"></ui-icon><ui-icon name="tsearch"></ui-icon><ui-icon name="snip" size="24"></ui-icon><ui-icon name="rdp" size="24"></ui-icon></div>
<task-item><ui-icon name="netease"></ui-icon>生而为人 - 尚...</task-item><task-item><ui-icon name="ffnew"></ui-icon>XSS漏洞笔记二...</task-item><task-item><ui-icon name="wps"></ui-icon>02_13作业.doc...</task-item><task-item><ui-icon name="burp"></ui-icon>Burp Suite Pr...</task-item><task-item><ui-icon name="ffold"></ui-icon>地址管理 - Mo...</task-item><task-item active><ui-icon name="wechat"></ui-icon>微信</task-item>
<div class="tray"><ui-icon name="tup"></ui-icon><ui-icon name="netease"></ui-icon><ui-icon name="wechat"></ui-icon><ui-icon name="vol"></ui-icon><ui-icon name="wifi"></ui-icon><ui-icon name="batt"></ui-icon><span class="zh">中</span><span class="py">拼</span><div class="clk">16:25:16<br>2020.02.13</div><ui-icon name="note"></ui-icon><i class="edge"></i></div>`);

define('app-window',`<style>:host{display:flex;flex-direction:column;height:100vh}</style>
<title-bar></title-bar><nav-bar></nav-bar><dev-bar></dev-bar><hack-bar></hack-bar><netcraft-bar></netcraft-bar><page-view></page-view><firebug-panel></firebug-panel><status-bar></status-bar><task-bar></task-bar>`);
</script>
</body>
</html>
